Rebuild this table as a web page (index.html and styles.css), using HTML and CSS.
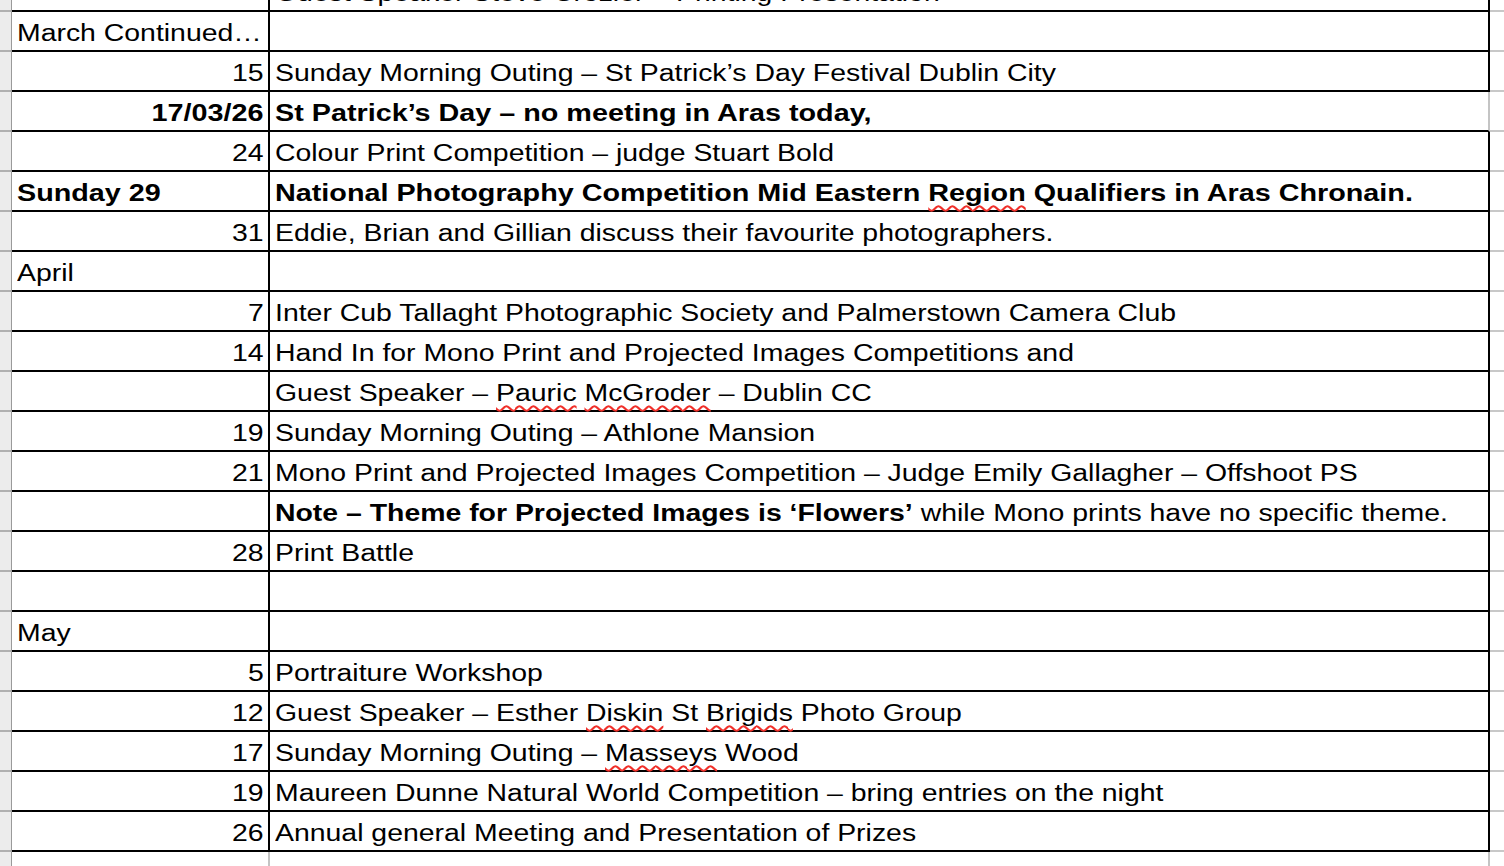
FILE: index.html
```html
<!DOCTYPE html>
<html lang="en">
<head>
<meta charset="utf-8">
<title>Club Programme</title>
<link rel="stylesheet" href="styles.css">
</head>
<body>
<div class="sheet">
  <div class="row"><div class="g"></div><div class="c1"></div><div class="c2"><span class="tx">Guest Speaker Steve Crozier – Printing Presentation</span></div><div class="tail"></div></div>
  <div class="row"><div class="g"></div><div class="c1"><span class="tx">March Continued…</span></div><div class="c2"></div><div class="tail"></div></div>
  <div class="row"><div class="g"></div><div class="c1 num"><span class="tx">15</span></div><div class="c2"><span class="tx">Sunday Morning Outing – St Patrick’s Day Festival Dublin City</span></div><div class="tail"></div></div>
  <div class="row"><div class="g"></div><div class="c1 num"><span class="tx b">17/03/26</span></div><div class="c2 soft"><span class="tx b">St Patrick’s Day – no meeting in Aras today,</span></div><div class="tail"></div></div>
  <div class="row"><div class="g"></div><div class="c1 num"><span class="tx">24</span></div><div class="c2"><span class="tx">Colour Print Competition – judge Stuart Bold</span></div><div class="tail"></div></div>
  <div class="row"><div class="g"></div><div class="c1"><span class="tx b">Sunday 29</span></div><div class="c2"><span class="tx b">National Photography Competition Mid Eastern <span class="sp">Region</span> Qualifiers in Aras Chronain.</span></div><div class="tail"></div></div>
  <div class="row"><div class="g"></div><div class="c1 num"><span class="tx">31</span></div><div class="c2"><span class="tx">Eddie, Brian and Gillian discuss their favourite photographers.</span></div><div class="tail"></div></div>
  <div class="row"><div class="g"></div><div class="c1"><span class="tx">April</span></div><div class="c2"></div><div class="tail"></div></div>
  <div class="row"><div class="g"></div><div class="c1 num"><span class="tx">7</span></div><div class="c2"><span class="tx">Inter Cub Tallaght Photographic Society and Palmerstown Camera Club</span></div><div class="tail"></div></div>
  <div class="row"><div class="g"></div><div class="c1 num"><span class="tx">14</span></div><div class="c2"><span class="tx">Hand In for Mono Print and Projected Images Competitions and</span></div><div class="tail"></div></div>
  <div class="row"><div class="g"></div><div class="c1"></div><div class="c2"><span class="tx">Guest Speaker – <span class="sp">Pauric</span> <span class="sp">McGroder</span> – Dublin CC</span></div><div class="tail"></div></div>
  <div class="row"><div class="g"></div><div class="c1 num"><span class="tx">19</span></div><div class="c2"><span class="tx">Sunday Morning Outing – Athlone Mansion</span></div><div class="tail"></div></div>
  <div class="row"><div class="g"></div><div class="c1 num"><span class="tx">21</span></div><div class="c2"><span class="tx">Mono Print and Projected Images Competition – Judge Emily Gallagher – Offshoot PS</span></div><div class="tail"></div></div>
  <div class="row"><div class="g"></div><div class="c1"></div><div class="c2"><span class="tx"><b>Note – Theme for Projected Images is ‘Flowers’</b> while Mono prints have no specific theme.</span></div><div class="tail"></div></div>
  <div class="row"><div class="g"></div><div class="c1 num"><span class="tx">28</span></div><div class="c2"><span class="tx">Print Battle</span></div><div class="tail"></div></div>
  <div class="row"><div class="g"></div><div class="c1"></div><div class="c2"></div><div class="tail"></div></div>
  <div class="row"><div class="g"></div><div class="c1"><span class="tx">May</span></div><div class="c2"></div><div class="tail"></div></div>
  <div class="row"><div class="g"></div><div class="c1 num"><span class="tx">5</span></div><div class="c2"><span class="tx">Portraiture Workshop</span></div><div class="tail"></div></div>
  <div class="row"><div class="g"></div><div class="c1 num"><span class="tx">12</span></div><div class="c2"><span class="tx">Guest Speaker – Esther <span class="sp">Diskin</span> St <span class="sp">Brigids</span> Photo Group</span></div><div class="tail"></div></div>
  <div class="row"><div class="g"></div><div class="c1 num"><span class="tx">17</span></div><div class="c2"><span class="tx">Sunday Morning Outing – <span class="sp">Masseys</span> Wood</span></div><div class="tail"></div></div>
  <div class="row"><div class="g"></div><div class="c1 num"><span class="tx">19</span></div><div class="c2"><span class="tx">Maureen Dunne Natural World Competition – bring entries on the night</span></div><div class="tail"></div></div>
  <div class="row"><div class="g"></div><div class="c1 num"><span class="tx">26</span></div><div class="c2"><span class="tx">Annual general Meeting and Presentation of Prizes</span></div><div class="tail"></div></div>
  <div class="row empty"><div class="g"></div><div class="c1"></div><div class="c2"></div><div class="tail"></div></div>
</div>
</body>
</html>
```

FILE: styles.css
```css
html, body {
  margin: 0;
  padding: 0;
  background: #ffffff;
  overflow: hidden;
}

body {
  font-family: "Liberation Sans", Arial, Helvetica, sans-serif;
  font-size: 23px;
  color: #000000;
}

.sheet {
  margin-top: -28px;
}

.row {
  display: flex;
  height: 40px;
}

.row > div {
  box-sizing: border-box;
  height: 40px;
  line-height: 38px;
  white-space: nowrap;
}

.g {
  flex: 0 0 12px;
  background: #ececec;
  border-right: 1px solid #9a9a9a;
  border-bottom: 2px solid #b0b0b0;
}

.c1 {
  flex: 0 0 258px;
  padding: 2px 4px 0 5px;
  border-right: 2px solid #000000;
  border-bottom: 2px solid #000000;
}

.c2 {
  flex: 0 0 1220px;
  padding: 2px 0 0 5px;
  border-right: 2px solid #000000;
  border-bottom: 2px solid #000000;
}

.c2.soft {
  border-right-color: #c4c4c4;
}

.tail {
  flex: 1 1 auto;
  border-bottom: 2px solid #c8c8c8;
}

.num {
  text-align: right;
}

.tx {
  display: inline-block;
  transform: scaleX(1.235);
  transform-origin: 0 50%;
}

.num .tx {
  transform-origin: 100% 50%;
}

.tx.b {
  font-weight: bold;
  transform: scaleX(1.25);
}

.tx b {
  font-weight: bold;
}

.sp {
  text-decoration: underline wavy #f0302a;
  text-decoration-thickness: 1.5px;
  text-decoration-skip-ink: none;
  text-underline-offset: 4px;
}

.empty > div {
  border-bottom: none;
}

.empty .c1,
.empty .c2 {
  border-right-color: #c4c4c4;
}
```
